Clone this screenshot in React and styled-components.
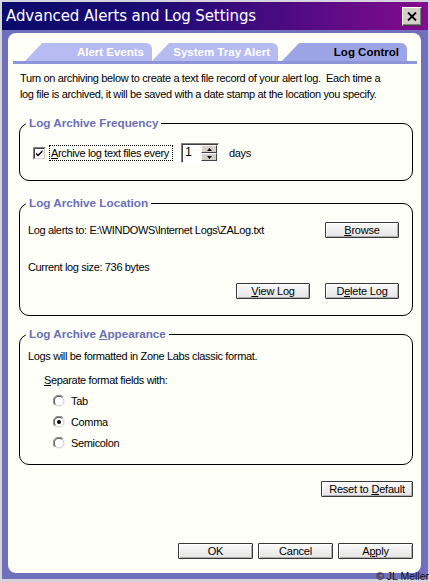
import React from 'react';
import styled, { createGlobalStyle } from 'styled-components';

const GlobalStyle = createGlobalStyle`
  html, body {
    margin: 0;
    padding: 0;
  }
  body {
    width: 430px;
    height: 582px;
    overflow: hidden;
    font-family: "Liberation Sans", Arial, sans-serif;
    font-size: 11px;
    letter-spacing: -0.35px;
    color: #000;
  }
`;

const Window = styled.div`
  position: relative;
  box-sizing: border-box;
  width: 430px;
  height: 582px;
  padding: 2px 2px 3px 2px;
  background: #d6d4dc;
  display: flex;
  flex-direction: column;
  overflow: hidden;
`;

const TitleBar = styled.div`
  flex: none;
  height: 28px;
  display: flex;
  align-items: center;
  justify-content: space-between;
  padding: 0 6px 0 4px;
  background: linear-gradient(90deg, #0a0a6c 0%, #1c0a74 35%, #4a0a82 65%, #840c8e 100%);
`;

const Title = styled.span`
  color: #fff;
  font-family: "DejaVu Sans", sans-serif;
  font-size: 15px;
  letter-spacing: -0.1px;
`;

const CloseButton = styled.button`
  box-sizing: border-box;
  width: 20px;
  height: 19px;
  padding: 0;
  background: #d4d0c8;
  border: 1px solid;
  border-color: #fff #404040 #404040 #fff;
  box-shadow: inset -1px -1px #808080;
  display: flex;
  align-items: center;
  justify-content: center;
`;

const Frame = styled.div`
  flex: 1;
  display: flex;
  padding: 3px 7px 6px 6px;
  background: #7070bc;
`;

const Panel = styled.div`
  flex: 1;
  display: flex;
  flex-direction: column;
  padding: 10px 4px 14px 5px;
  background: #fffffa;
  border-radius: 8px;
`;

const TabStrip = styled.div`
  display: flex;
  align-items: flex-end;
  height: 18px;
  padding-left: 12px;
  border-bottom: 3px solid #8e95d8;
`;

const Tab = styled.div`
  box-sizing: border-box;
  width: ${p => p.$w}px;
  height: 18px;
  margin-left: ${p => p.$gap || 0}px;
  padding: 0 8px 0 18px;
  display: flex;
  align-items: center;
  justify-content: flex-end;
  background: ${p => (p.$active ? '#9da4e6' : '#b6bcf2')};
  color: ${p => (p.$active ? '#000' : '#fff')};
  font-weight: bold;
  font-size: 11.5px;
  letter-spacing: 0;
  border-top-right-radius: 6px;
  clip-path: polygon(0 100%, 17px 0, 100% 0, 100% 100%);
`;

const Content = styled.div`
  flex: 1;
  display: flex;
  flex-direction: column;
  padding: 0 4px 0 6px;
`;

const Intro = styled.p`
  margin: 7px 0 0 1px;
  line-height: 15.5px;
  white-space: nowrap;
`;

const Group = styled.fieldset`
  margin: ${p => p.$top}px 0 0 0;
  padding: 0;
  min-width: 0;
  border: 1px solid #000;
  border-radius: 10px;
`;

const Legend = styled.legend`
  margin-left: 6px;
  padding: 0 3px;
  font-weight: bold;
  font-size: 11.7px;
  letter-spacing: 0;
  line-height: 14px;
  color: #6a70b4;
`;

const GroupBody = styled.div`
  display: flex;
  flex-direction: column;
  padding: ${p => p.$pad};
`;

const Row = styled.div`
  display: flex;
  align-items: center;
  justify-content: ${p => p.$justify || 'flex-start'};
  gap: ${p => p.$gap || 0}px;
  margin-top: ${p => p.$top || 0}px;
  margin-left: ${p => p.$indent || 0}px;
  height: ${p => p.$h || 15}px;
  line-height: 15px;
`;

const FocusLabel = styled.span`
  margin-left: 3px;
  padding: 0 3px 0 1px;
  line-height: 14px;
  border: 1px dotted #000;
`;

const Spinner = styled.div`
  box-sizing: border-box;
  display: flex;
  width: 38px;
  height: 20px;
  margin-left: 8px;
  border: 1px solid;
  border-color: #808080 #fff #fff #808080;
  box-shadow: inset 1px 1px #404040;
  background: #fff;
`;

const SpinValue = styled.span`
  flex: 1;
  padding: 1px 0 0 3px;
  font-size: 12.5px;
`;

const SpinArrows = styled.div`
  display: flex;
  flex-direction: column;
  width: 16px;
  padding: 1px 1px 1px 0;
`;

const SpinArrow = styled.div`
  flex: 1;
  display: flex;
  align-items: center;
  justify-content: center;
  background: #d4d0c8;
  border: 1px solid;
  border-color: #fff #404040 #404040 #fff;
`;

const Days = styled.span`
  margin-left: 10px;
`;

const Button = styled.button`
  box-sizing: border-box;
  width: ${p => p.$w || 75}px;
  height: 16px;
  padding: 0;
  font-family: "Liberation Sans", Arial, sans-serif;
  font-size: 11px;
  letter-spacing: -0.2px;
  line-height: 14px;
  color: #000;
  background: linear-gradient(#fafafa, #e4e4e4);
  border: 1px solid #383838;
  border-radius: 1px;
  box-shadow: inset 1px 1px #fff, inset -1px -1px #b0b0b0;
`;

const Key = styled.span`
  text-decoration: underline;
`;

const RadioGroup = styled.div`
  margin-top: 2px;
`;

const RadioRow = styled.label`
  display: flex;
  align-items: center;
  height: 21px;
  margin-left: 25px;
  gap: 6px;
`;

const Footer = styled.div`
  display: flex;
  justify-content: flex-end;
  gap: 5px;
  margin-top: ${p => (p.$auto ? 'auto' : `${p.$top}px`)};
`;

const Credit = styled.span`
  position: absolute;
  right: 1px;
  bottom: 0;
  font-size: 10.5px;
  line-height: 11px;
  letter-spacing: 0;
  color: #101010;
`;

const CheckBox = () => (
  <svg width="13" height="13" viewBox="0 0 13 13">
    <rect x="0" y="0" width="13" height="13" fill="#fff" />
    <path d="M0.5 12.5V0.5H12.5" stroke="#808080" fill="none" />
    <path d="M1.5 11.5V1.5H11.5" stroke="#404040" fill="none" />
    <path d="M1.5 11.5H11.5V1.5" stroke="#d4d0c8" fill="none" />
    <path d="M0.5 12.5H12.5V0.5" stroke="#fff" fill="none" />
    <path d="M3 5.5l2 2 4.5-4.5v2l-4.5 4.5-2-2z" fill="#000" />
  </svg>
);

const Radio = ({ checked }) => (
  <svg width="12" height="12" viewBox="0 0 12 12">
    <circle cx="6" cy="6" r="5" fill="#fff" />
    <path d="M1.8 10.2A5.8 5.8 0 0 1 10.2 1.8" stroke="#808080" fill="none" />
    <path d="M2.6 9.4A4.8 4.8 0 0 1 9.4 2.6" stroke="#404040" fill="none" />
    <path d="M10.2 1.8A5.8 5.8 0 0 1 1.8 10.2" stroke="#f4f4f4" fill="none" />
    <path d="M9.4 2.6A4.8 4.8 0 0 1 2.6 9.4" stroke="#d4d0c8" fill="none" />
    {checked && <circle cx="6" cy="6" r="2" fill="#000" />}
  </svg>
);

const Arrow = ({ up }) => (
  <svg width="5" height="3" viewBox="0 0 5 3">
    <path d={up ? 'M0 3h5L2.5 0z' : 'M0 0h5L2.5 3z'} fill="#000" />
  </svg>
);

export default function App() {
  return (
    <>
      <GlobalStyle />
      <Window>
        <TitleBar>
          <Title>Advanced Alerts and Log Settings</Title>
          <CloseButton aria-label="Close">
            <svg width="10" height="9" viewBox="0 0 10 9">
              <path d="M1 0.5l8 8M9 0.5l-8 8" stroke="#000" strokeWidth="1.8" />
            </svg>
          </CloseButton>
        </TitleBar>
        <Frame>
          <Panel>
            <TabStrip>
              <Tab $w={127}>Alert Events</Tab>
              <Tab $w={126}>System Tray Alert</Tab>
              <Tab $w={125} $gap={4} $active>Log Control</Tab>
            </TabStrip>
            <Content>
              <Intro>
                Turn on archiving below to create a text file record of your alert log.&nbsp; Each time a
                <br />
                log file is archived, it will be saved with a date stamp at the location you specify.
              </Intro>

              <Group $top={14}>
                <Legend>Log Archive Frequency</Legend>
                <GroupBody $pad="13px 0 17px 13px">
                  <Row $h={20}>
                    <CheckBox />
                    <FocusLabel><Key>A</Key>rchive log text files every</FocusLabel>
                    <Spinner>
                      <SpinValue>1</SpinValue>
                      <SpinArrows>
                        <SpinArrow><Arrow up /></SpinArrow>
                        <SpinArrow><Arrow /></SpinArrow>
                      </SpinArrows>
                    </Spinner>
                    <Days>days</Days>
                  </Row>
                </GroupBody>
              </Group>

              <Group $top={15}>
                <Legend>Log Archive Location</Legend>
                <GroupBody $pad="12px 13px 16px 8px">
                  <Row $h={16} $justify="space-between">
                    <span>Log alerts to: E:\WINDOWS\Internet Logs\ZALog.txt</span>
                    <Button $w={74}><Key>B</Key>rowse</Button>
                  </Row>
                  <Row $top={22}>Current log size: 736 bytes</Row>
                  <Row $h={16} $top={8} $justify="flex-end" $gap={15}>
                    <Button $w={74}><Key>V</Key>iew Log</Button>
                    <Button $w={74}>D<Key>e</Key>lete Log</Button>
                  </Row>
                </GroupBody>
              </Group>

              <Group $top={11}>
                <Legend>Log Archive <Key>A</Key>ppearance</Legend>
                <GroupBody $pad="8px 0 11px 8px">
                  <Row>Logs will be formatted in Zone Labs classic format.</Row>
                  <Row $top={9} $indent={16}><Key>S</Key>eparate format fields with:</Row>
                  <RadioGroup>
                    <RadioRow><Radio />Tab</RadioRow>
                    <RadioRow><Radio checked />Comma</RadioRow>
                    <RadioRow><Radio />Semicolon</RadioRow>
                  </RadioGroup>
                </GroupBody>
              </Group>

              <Footer $top={16}>
                <Button $w={92}>Reset to <Key>D</Key>efault</Button>
              </Footer>
              <Footer $auto>
                <Button>OK</Button>
                <Button>Cancel</Button>
                <Button>A<Key>p</Key>ply</Button>
              </Footer>
            </Content>
          </Panel>
        </Frame>
        <Credit>© JL Meller</Credit>
      </Window>
    </>
  );
}
